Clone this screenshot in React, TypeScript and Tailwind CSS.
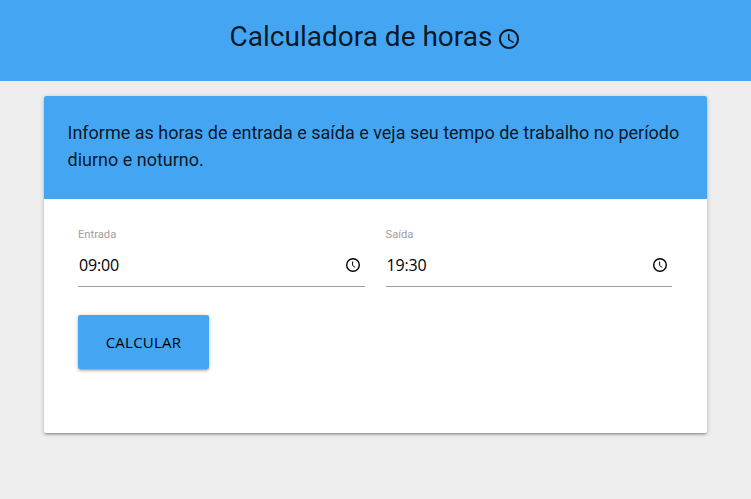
function Clock({ className }: { className: string }) {
  return (
    <svg viewBox="0 0 24 24" className={className} fill="currentColor">
      <path d="M11.99 2C6.47 2 2 6.48 2 12s4.47 10 9.99 10C17.52 22 22 17.52 22 12S17.52 2 11.99 2zM12 20c-4.42 0-8-3.58-8-8s3.58-8 8-8 8 3.58 8 8-3.58 8-8 8zm.5-13H11v6l5.25 3.15.75-1.23-4.5-2.67z" />
    </svg>
  );
}

function PickerClock() {
  return (
    <svg viewBox="0 0 16 16" className="size-4" fill="none" stroke="currentColor">
      <circle cx="8" cy="8" r="6.3" strokeWidth="1.4" />
      <path d="M7.6 4.5v3.9l2.6 2.1" strokeWidth="1" />
    </svg>
  );
}

function Field({ label, value }: { label: string; value: string }) {
  return (
    <div className="flex-1">
      <div className="h-4 text-[11.2px] leading-4 text-[#9e9e9e]">{label}</div>
      <div className="flex h-11 items-center justify-between border-b border-[#9e9e9e] pr-1 pl-px text-base text-black">
        <span className="pt-px font-['Open_Sans',sans-serif] tracking-[-0.15px]">{value}</span>
        <PickerClock />
      </div>
    </div>
  );
}

export default function App() {
  return (
    <div className="min-h-[499px] bg-[#eeeeee] font-[Roboto,sans-serif] text-black/87">
      <header className="flex h-[81px] items-start justify-center bg-[#44a6f3] pt-[17px]">
        <h1 className="flex items-center text-[28px] leading-10">
          Calculadora de horas
          <Clock className="mt-1 ml-[5px] size-6" />
        </h1>
      </header>
      <main className="mx-11 mt-[15px] h-[337px] overflow-hidden rounded-[2px] bg-white shadow-[0_2px_2px_0_rgba(0,0,0,0.14),0_3px_1px_-2px_rgba(0,0,0,0.12),0_1px_5px_0_rgba(0,0,0,0.2)]">
        <p className="h-[103px] bg-[#44a6f3] pt-[23px] pr-6 pl-[23.5px] text-[18px] leading-[27px]">
          Informe as horas de entrada e saída e veja seu tempo de trabalho no período diurno e noturno.
        </p>
        <div className="flex gap-[21px] pt-7 pr-[35px] pl-[34px]">
          <Field label="Entrada" value="09:00" />
          <Field label="Saída" value="19:30" />
        </div>
        <button className="mt-7 ml-[34px] h-[54px] w-[131px] rounded-[2px] bg-[#44a6f3] font-['Open_Sans',sans-serif] text-[15px] tracking-[0.25px] text-black shadow-[0_2px_2px_0_rgba(0,0,0,0.14),0_3px_1px_-2px_rgba(0,0,0,0.12),0_1px_5px_0_rgba(0,0,0,0.2)]">
          CALCULAR
        </button>
      </main>
    </div>
  );
}
